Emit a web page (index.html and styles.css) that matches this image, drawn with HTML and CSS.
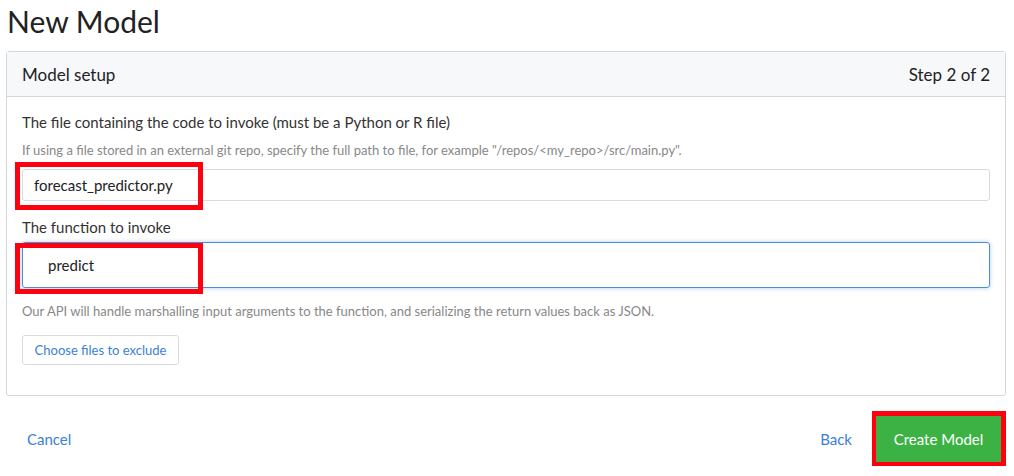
FILE: index.html
```html
<!DOCTYPE html>
<html>
<head>
<meta charset="utf-8">
<link rel="stylesheet" href="styles.css">
</head>
<body>
<h1 class="title">New Model</h1>
<div class="card">
  <div class="card-header">
    <span>Model setup</span>
    <span>Step 2 of 2</span>
  </div>
  <div class="card-body">
    <div class="label l1">The file containing the code to invoke (must be a Python or R file)</div>
    <div class="help h1x">If using a file stored in an external git repo, specify the full path to file, for example "/repos/&lt;my_repo&gt;/src/main.py".</div>
    <div class="field">
      <div class="input in1">forecast_predictor.py</div>
      <div class="mark m1"></div>
    </div>
    <div class="label l2">The function to invoke</div>
    <div class="field">
      <div class="input in2 focus">predict</div>
      <div class="mark m2"></div>
    </div>
    <div class="help h2x">Our API will handle marshalling input arguments to the function, and serializing the return values back as JSON.</div>
    <button class="btn-outline">Choose files to exclude</button>
  </div>
</div>
<div class="footer">
  <a class="link cancel">Cancel</a>
  <div class="right">
    <a class="link back">Back</a>
    <div class="mark-btn"><button class="btn-green">Create Model</button></div>
  </div>
</div>
</body>
</html>
```
FILE: styles.css
```css
* { box-sizing: border-box; }
body {
  margin: 0;
  font-family: "Lato", "Helvetica Neue", Arial, sans-serif;
  color: #333;
  background: #fff;
}
.title {
  margin: 0;
  padding: 2px 0 0 7px;
  font-size: 30px;
  font-weight: 400;
  line-height: 38px;
  color: #222;
  height: 51px;
}
.card {
  margin: 0 8px 0 6px;
  border: 1px solid #d4d7dc;
  border-radius: 3px;
  height: 345px;
}
.card-header {
  height: 45px;
  background: #f7f8fa;
  border-bottom: 1px solid #d4d7dc;
  display: flex;
  justify-content: space-between;
  align-items: center;
  padding: 0 15px;
  font-size: 17px;
  color: #222;
}
.card-body {
  padding: 16px 15px 0 15px;
}
.label {
  font-size: 15px;
  color: #333;
  line-height: 18px;
}
.help {
  font-size: 13px;
  color: #888;
  line-height: 14px;
}
.h1x { margin-top: 12px; }
.field { position: relative; }
.input {
  border: 1px solid #d9dbdf;
  border-radius: 3px;
  font-size: 15px;
  color: #222;
  display: flex;
  align-items: center;
}
.in1 { margin-top: 12px; height: 32px; padding-left: 11px; }
.l2 { margin-top: 17px; }
.in2 { margin-top: 6px; height: 46px; padding-left: 25px; }
.focus {
  border-color: #4a8fdc;
  box-shadow: 0 0 4px rgba(74, 143, 220, 0.45);
}
.mark {
  position: absolute;
  border: 5px solid #ff0010;
  left: -7px;
  width: 188px;
}
.m1 { top: -7px; height: 48px; }
.m2 { top: 1px; height: 51px; }
.h2x { margin-top: 16px; }
.btn-outline {
  margin-top: 17px;
  height: 30px;
  width: 157px;
  background: #fff;
  border: 1px solid #d9dbdf;
  border-radius: 3px;
  color: #3b7fd6;
  font-family: inherit;
  font-size: 13px;
  padding: 0;
}
.footer {
  display: flex;
  justify-content: space-between;
  align-items: center;
  padding: 15px 8px 0 27px;
}
.right { display: flex; align-items: center; }
.link {
  color: #3b7fd6;
  font-size: 15px;
}
.back { margin-right: 20px; }
.mark-btn {
  border: 5px solid #ff0010;
  border-left-width: 4px;
  border-bottom-width: 4px;
}
.btn-green {
  display: block;
  width: 125px;
  height: 46px;
  background: #3cb244;
  color: #fff;
  border: none;
  font-family: inherit;
  font-size: 15px;
  padding: 0;
}
```
